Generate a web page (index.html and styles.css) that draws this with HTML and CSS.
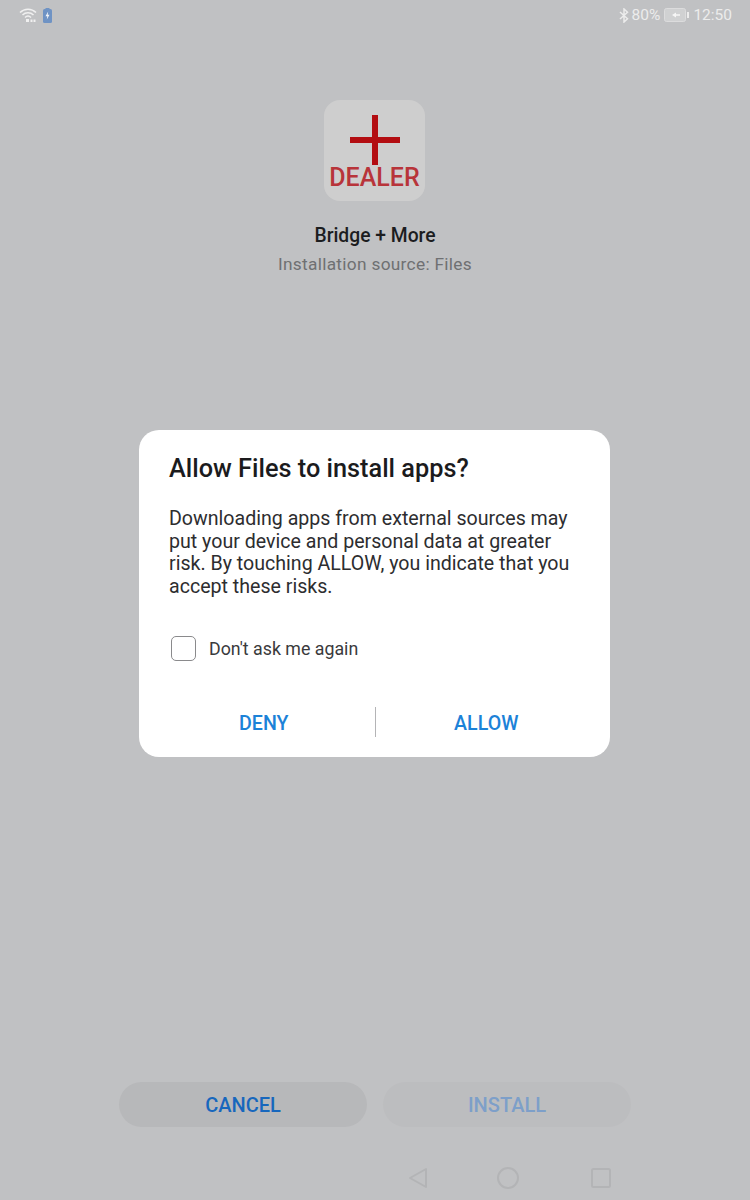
FILE: index.html
```html
<!DOCTYPE html>
<html lang="en">
<head>
  <meta charset="UTF-8" />
  <meta name="viewport" content="width=device-width, initial-scale=1.0" />
  <title>Install app</title>
  <link rel="stylesheet" href="styles.css">
</head>
<body>
  <div class="screen">
    <div class="status-bar">
      <div class="status-left">
        <svg class="wifi-icon" width="18" height="16" viewBox="0 0 18 16">
          <path d="M1 5.500C5.500 1 12.500 1 17 5.500M3.500 8C6.500 5 11.500 5 14.500 8M6 10.500C7.800 8.800 10.200 8.800 12 10.500" fill="none" stroke="#f0f0f0" stroke-width="1.500"/>
          <rect x="7" y="12" width="3" height="3" fill="#f0f0f0"/>
          <rect x="11.500" y="12.500" width="2" height="2.500" fill="#f0f0f0"/>
          <rect x="14.500" y="12.500" width="2" height="2.500" fill="#f0f0f0"/>
        </svg>
        <svg class="charge-icon" width="9" height="15" viewBox="0 0 9 15">
          <rect x="2.500" y="0" width="4" height="2" fill="#6f93c4"/>
          <rect x="0" y="1" width="9" height="14" rx="1.500" fill="#6f93c4"/>
          <path d="M5.200 3.500L2.500 8.300H4.300L3.800 11.500L6.500 6.800H4.700Z" fill="#f2f4f7"/>
        </svg>
      </div>
      <div class="status-right">
        <svg class="bt-icon" width="10" height="15" viewBox="0 0 10 15">
          <path d="M1 4L8.500 10.700L5 14V1L8.500 4.300L1 11" fill="none" stroke="#ececec" stroke-width="1.500"/>
        </svg>
        <span class="status-text">80%</span>
        <svg class="battery-icon" width="25" height="14" viewBox="0 0 25 14">
          <rect x="0.500" y="0.500" width="21" height="13" rx="2" fill="#d0d1d2" stroke="#dcdcdd"/>
          <path d="M8 7L12 4.500V6.300H16V7.700H12V9.500Z" fill="#f6f6f6"/>
          <rect x="23" y="4" width="2" height="6" fill="#ececec"/>
        </svg>
        <span class="status-text status-time">12:50</span>
      </div>
    </div>

    <div class="app-info">
      <div class="app-icon">
        <div class="plus"></div>
        <div class="dealer">DEALER</div>
      </div>
      <div class="app-name">Bridge + More</div>
      <div class="app-source">Installation source: Files</div>
    </div>

    <div class="actions">
      <div class="pill pill-cancel">CANCEL</div>
      <div class="pill pill-install">INSTALL</div>
    </div>

    <div class="nav-bar">
      <svg class="nav-back" width="20" height="22" viewBox="0 0 20 22">
        <path d="M18 2V20L2 11Z" fill="none" stroke="#b3b4b6" stroke-width="2" stroke-linejoin="round"/>
      </svg>
      <svg class="nav-home" width="22" height="22" viewBox="0 0 22 22">
        <circle cx="11" cy="11" r="10" fill="none" stroke="#b3b4b6" stroke-width="2"/>
      </svg>
      <svg class="nav-recent" width="20" height="20" viewBox="0 0 20 20">
        <rect x="1" y="1" width="18" height="18" rx="1.500" fill="none" stroke="#b3b4b6" stroke-width="2"/>
      </svg>
    </div>

    <div class="dialog">
      <h1>Allow Files to install apps?</h1>
      <p>Downloading apps from external sources may put your device and personal data at greater risk. By touching ALLOW, you indicate that you accept these risks.</p>
      <div class="check-row">
        <span class="checkbox"></span>
        <span class="check-label">Don't ask me again</span>
      </div>
      <div class="dialog-buttons">
        <div class="dialog-btn">DENY</div>
        <div class="divider"></div>
        <div class="dialog-btn">ALLOW</div>
      </div>
    </div>
  </div>
</body>
</html>
```

FILE: styles.css
```css
* {
  box-sizing: border-box;
}
body {
  margin: 0;
  font-family: Roboto, "Liberation Sans", sans-serif;
  background: #c0c1c3;
}
.screen {
  position: relative;
  width: 750px;
  height: 1200px;
  display: flex;
  flex-direction: column;
  background: #c0c1c3;
  overflow: hidden;
}
.status-bar {
  height: 32px;
  padding: 0 18px 2px 19px;
  display: flex;
  align-items: center;
  justify-content: space-between;
}
.status-left, .status-right {
  display: flex;
  align-items: center;
}
.charge-icon {
  margin-left: 6px;
}
.status-text {
  font-size: 15.500px;
  color: #ececec;
  margin-left: 3px;
}
.battery-icon {
  margin-left: 4px;
}
.status-time {
  margin-left: 4px;
}
.app-info {
  margin-top: 68px;
  display: flex;
  flex-direction: column;
  align-items: center;
}
.app-icon {
  width: 101px;
  height: 101px;
  background: #cecece;
  border-radius: 16px;
  position: relative;
  margin-left: -1px;
}
.plus {
  position: absolute;
  left: 26px;
  top: 15px;
  width: 50px;
  height: 50px;
  background:
    linear-gradient(#b30d12, #b30d12) center / 6px 50px no-repeat,
    linear-gradient(#b30d12, #b30d12) center / 50px 6px no-repeat;
}
.dealer {
  position: absolute;
  left: 0;
  right: 0;
  top: 63px;
  text-align: center;
  font-size: 25px;
  font-weight: 500;
  line-height: 30px;
  color: #b8343a;
}
.app-name {
  margin-top: 23px;
  font-size: 19.300px;
  line-height: 24px;
  font-weight: 500;
  color: #1c1d1f;
}
.app-source {
  margin-top: 5px;
  font-size: 17.300px;
  line-height: 22px;
  letter-spacing: 0.300px;
  color: #6f7072;
}
.actions {
  margin-top: auto;
  padding: 0 119px;
  display: flex;
  gap: 16px;
}
.pill {
  width: 248px;
  height: 45px;
  border-radius: 23px;
  display: flex;
  align-items: center;
  justify-content: center;
  font-size: 20px;
  font-weight: 500;
}
.pill-cancel {
  background: #b7b8ba;
  color: #1767bd;
}
.pill-install {
  background: #bcbdbf;
  color: #7d9fc9;
}
.nav-bar {
  height: 73px;
  display: flex;
  align-items: center;
  padding: 29px 0 0 408px;
}
.nav-home {
  margin-left: 69px;
}
.nav-recent {
  margin-left: 72px;
}
.dialog {
  position: absolute;
  left: 139px;
  top: 430px;
  width: 471px;
  height: 327px;
  background: #fff;
  border-radius: 20px;
  padding: 23px 30px 0;
}
.dialog h1 {
  margin: 0;
  font-size: 25.300px;
  line-height: 32px;
  font-weight: 500;
  color: #1b1b1d;
}
.dialog p {
  margin: 23px 0 0;
  font-size: 19.600px;
  line-height: 22.600px;
  color: #2d2d2f;
}
.check-row {
  margin: 37px 0 0 2px;
  display: flex;
  align-items: center;
}
.checkbox {
  width: 25px;
  height: 25px;
  border: 1px solid #8a8a8c;
  border-radius: 5px;
}
.check-label {
  margin-left: 13px;
  padding-top: 1px;
  font-size: 17.800px;
  line-height: 25px;
  color: #3a3a3c;
}
.dialog-buttons {
  position: absolute;
  left: 14px;
  right: 13px;
  bottom: 20px;
  height: 30px;
  display: flex;
  align-items: center;
}
.dialog-btn {
  flex: 1;
  padding-top: 2px;
  text-align: center;
  font-size: 19.600px;
  font-weight: 500;
  color: #1c82d8;
}
.divider {
  width: 1px;
  height: 30px;
  background: #b4b4b6;
}
```
